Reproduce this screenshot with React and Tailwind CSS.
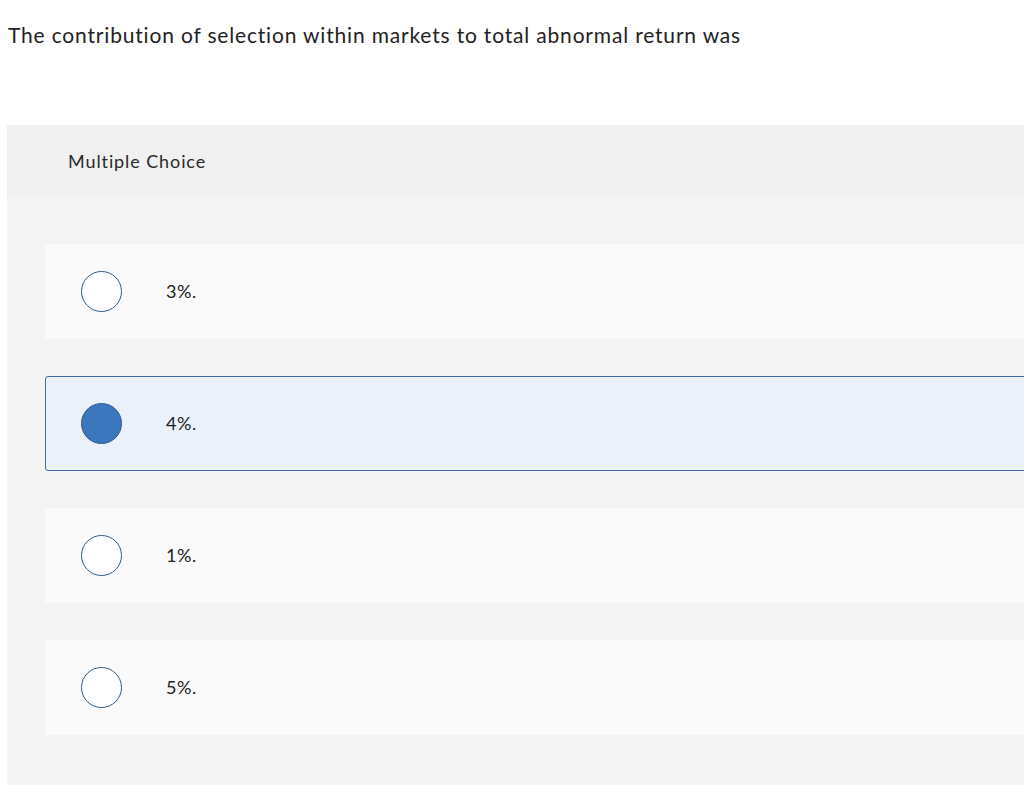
import React from "react";

const options = [
  { id: "a", label: "3%.", selected: false },
  { id: "b", label: "4%.", selected: true },
  { id: "c", label: "1%.", selected: false },
  { id: "d", label: "5%.", selected: false },
];

function Radio({ selected }) {
  return selected ? (
    <div className="w-[41px] h-[41px] rounded-full bg-[#3b77bd] border border-[#2c5a8c] shrink-0" />
  ) : (
    <div className="w-[41px] h-[41px] rounded-full bg-white border-[1.5px] border-[#2f5a82] shrink-0" />
  );
}

export default function App() {
  return (
    <div className="w-[1024px] h-[785px] overflow-hidden bg-white text-[#222] font-['Lato',sans-serif]">
      {/* Question */}
      <div className="pl-[8px] pt-[21px] h-[125px]">
        <p className="text-[21px] leading-[28px] tracking-[0.82px]">
          The contribution of selection within markets to total abnormal return was
        </p>
      </div>

      {/* Answer panel */}
      <div className="ml-[7px] w-[1100px] bg-[#f4f4f4] h-[660px]">
        <div className="h-[72px] bg-[#f0f0f0] flex items-center pl-[61px]">
          <span className="text-[18px] tracking-[0.9px] text-[#2a2a2a]">Multiple Choice</span>
        </div>

        <div className="pl-[38px] pt-[47px] flex flex-col gap-[37px]">
          {options.map(o => (
            <div
              key={o.id}
              className={
                o.selected
                  ? "h-[95px] flex items-center pl-[35px] bg-[#eaf1fb] border border-[#3c68a4] rounded-l-[3px]"
                  : "h-[95px] flex items-center pl-[36px] bg-[#fafafa]"
              }
            >
              <Radio selected={o.selected} />
              <span className="ml-[44px] text-[18px] tracking-[0.6px] text-[#222]">{o.label}</span>
            </div>
          ))}
        </div>
      </div>
    </div>
  );
}
